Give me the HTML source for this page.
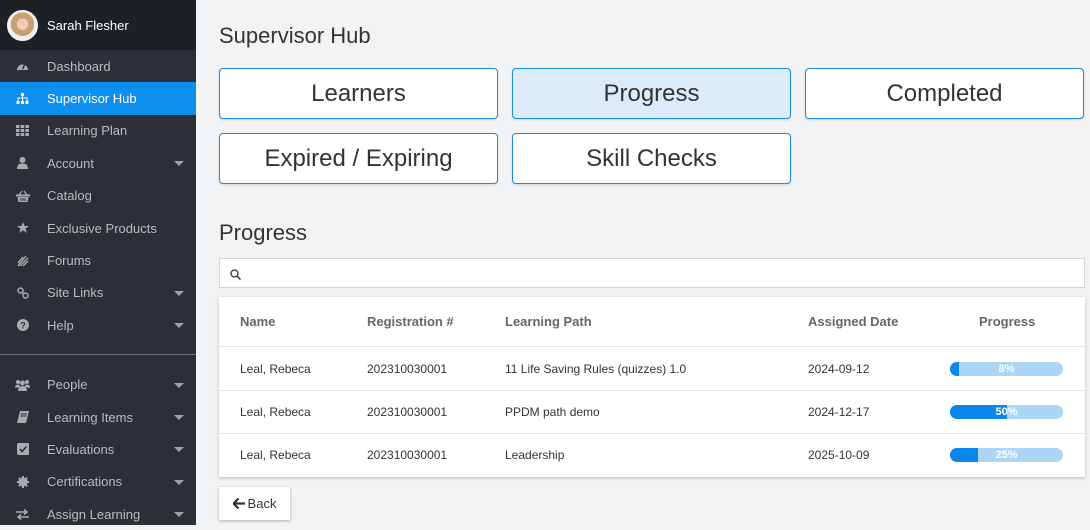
<!DOCTYPE html>
<html><head><meta charset="utf-8">
<style>
*{box-sizing:border-box;margin:0;padding:0}
body{width:1090px;height:525px;overflow:hidden;background:#f2f3f5;font-family:"Liberation Sans",sans-serif;position:relative}
.side{position:absolute;left:0;top:0;width:196px;height:525px;background:#2b3036}
.top{height:50px;background:#1d2125;display:flex;align-items:center;padding-left:7px}
.av{width:31px;height:31px;border-radius:50%;background:radial-gradient(circle at 50% 45%,#f0cdb5 0 28%,#c9a070 29% 58%,#eee 59%);border:2px solid #f4f4f4}
.top span{color:#fff;font-size:13px;margin-left:9px}
.item{height:32.4px;display:flex;align-items:center;color:#b9bcc0;font-size:13px;position:relative}
.item .ic{width:47px;display:flex;justify-content:center;padding-right:2px}
.item.act{background:#0d8ff0;color:#fff}
.item .car{position:absolute;right:12px;top:14px;border-left:5px solid transparent;border-right:5px solid transparent;border-top:5px solid #9da1a6}
.div{height:1px;background:#6c7176;margin:12px 0 14px}
.main{position:absolute;left:196px;top:0;right:0;bottom:0}
h1{position:absolute;left:23px;top:23px;font-size:22px;font-weight:normal;color:#333}
h2{position:absolute;left:23px;top:220px;font-size:22px;font-weight:normal;color:#333}
.btn{position:absolute;width:279px;height:51px;border:1px solid #1b8ce0;border-radius:4px;background:#fff;display:flex;align-items:center;justify-content:center;font-size:24px;color:#333;box-shadow:0 1px 2px rgba(0,0,0,.15)}
.btn.sel{background:#dcebf9}
.search{position:absolute;left:23px;top:258px;width:866px;height:30px;background:#fff;border:1px solid #d2d4d7;padding:8px 10px}
.tbl{position:absolute;left:23px;top:297px;width:866px;height:180px;background:#fff;box-shadow:0 1px 3px rgba(0,0,0,.25);font-size:12px;color:#333}
.row{position:absolute;left:0;width:866px;border-top:1px solid #e2e3e5}
.row div{position:absolute}
.hd{color:#666;font-weight:bold;font-size:13px}
.bar{position:absolute;left:731px;width:113px;height:14px;border-radius:7px;background:#abd6f6;overflow:hidden}
.bar i{position:absolute;left:0;top:0;bottom:0;background:#0b87ec}
.bar b{position:absolute;left:0;right:0;top:0;text-align:center;color:#fff;font-size:11px;line-height:14px}
.back{position:absolute;left:23px;top:487px;width:71px;height:33px;background:#fff;box-shadow:0 1px 3px rgba(0,0,0,.3);font-size:13px;display:flex;align-items:center;justify-content:center;color:#333}
</style></head><body>
<div class="side">
<div class="top"><div class="av"></div><span>Sarah Flesher</span></div>
<div class="item"><span class="ic"><svg width="13" height="12" viewBox="0 0 13 12"><path d="M1 10A5.5 5.5 0 1 1 12 10Z" fill="#a8acb1"/><path d="M6.5 9L9 4" stroke="#2b3036" stroke-width="1.5"/></svg></span>Dashboard</div>
<div class="item act"><span class="ic"><svg width="13" height="12" viewBox="0 0 13 12"><rect x="5" y="0" width="3" height="3" fill="#fff"/><path d="M6.5 3V5M2 8V5H11V8M6.5 5V8" stroke="#fff" fill="none"/><rect x="0.5" y="8" width="3" height="3" fill="#fff"/><rect x="5" y="8" width="3" height="3" fill="#fff"/><rect x="9.5" y="8" width="3" height="3" fill="#fff"/></svg></span>Supervisor Hub</div>
<div class="item"><span class="ic"><svg width="13" height="11" viewBox="0 0 13 11"><g fill="#a8acb1"><rect x="0" y="0" width="3.5" height="3"/><rect x="4.7" y="0" width="3.5" height="3"/><rect x="9.4" y="0" width="3.5" height="3"/><rect x="0" y="4" width="3.5" height="3"/><rect x="4.7" y="4" width="3.5" height="3"/><rect x="9.4" y="4" width="3.5" height="3"/><rect x="0" y="8" width="3.5" height="3"/><rect x="4.7" y="8" width="3.5" height="3"/><rect x="9.4" y="8" width="3.5" height="3"/></g></svg></span>Learning Plan</div>
<div class="item"><span class="ic"><svg width="11" height="12" viewBox="0 0 11 12"><circle cx="5.5" cy="3" r="3" fill="#a8acb1"/><path d="M0 12Q0 6 5.5 6.5Q11 6 11 12Z" fill="#a8acb1"/></svg></span>Account<span class="car"></span></div>
<div class="item"><span class="ic"><svg width="14" height="12" viewBox="0 0 14 12"><path d="M3 5L6 1M11 5L8 1" stroke="#a8acb1" stroke-width="1.3"/><rect x="0" y="4.5" width="14" height="2" fill="#a8acb1"/><path d="M1.5 7H12.5L11.5 12H2.5Z" fill="#a8acb1"/><path d="M5 8V11M7 8V11M9 8V11" stroke="#2b3036"/></svg></span>Catalog</div>
<div class="item"><span class="ic"><svg width="12" height="12" viewBox="0 0 12 12"><path d="M6 0L7.6 4H12L8.5 6.6L9.8 11L6 8.3L2.2 11L3.5 6.6L0 4H4.4Z" fill="#a8acb1"/></svg></span>Exclusive Products</div>
<div class="item"><span class="ic"><svg width="12" height="12" viewBox="0 0 12 12"><path d="M1 11L9 1M3 11L11 3M1 8L6 2M6 11L11 6" stroke="#a8acb1" stroke-width="1.4"/></svg></span>Forums</div>
<div class="item"><span class="ic"><svg width="12" height="12" viewBox="0 0 12 12"><circle cx="3.5" cy="3.5" r="2.5" stroke="#a8acb1" stroke-width="1.5" fill="none"/><circle cx="8.5" cy="8.5" r="2.5" stroke="#a8acb1" stroke-width="1.5" fill="none"/><path d="M5 5L7 7" stroke="#a8acb1" stroke-width="1.5"/></svg></span>Site Links<span class="car"></span></div>
<div class="item"><span class="ic"><svg width="12" height="12" viewBox="0 0 12 12"><circle cx="6" cy="6" r="6" fill="#a8acb1"/><text x="6" y="9.5" font-size="9" font-weight="bold" text-anchor="middle" fill="#2b3036" font-family="Liberation Sans">?</text></svg></span>Help<span class="car"></span></div>
<div class="div"></div>
<div class="item"><span class="ic"><svg width="15" height="12" viewBox="0 0 15 12"><g fill="#a8acb1"><circle cx="3" cy="3" r="2"/><circle cx="12" cy="3" r="2"/><circle cx="7.5" cy="4" r="2.5"/><path d="M0 9Q0 5.5 3 5.5Q5 5.5 5 8ZM15 9Q15 5.5 12 5.5Q10 5.5 10 8ZM3 12Q3 7 7.5 7Q12 7 12 12Z"/></g></svg></span>People<span class="car"></span></div>
<div class="item"><span class="ic"><svg width="12" height="12" viewBox="0 0 12 12"><path d="M3 0H12L9 12H0Z" fill="#a8acb1"/><path d="M4 3H10M3.5 5H9.5" stroke="#2b3036"/></svg></span>Learning Items<span class="car"></span></div>
<div class="item"><span class="ic"><svg width="12" height="12" viewBox="0 0 12 12"><rect width="12" height="12" rx="1.5" fill="#a8acb1"/><path d="M3 6L5 8.5L9.5 3.5" stroke="#2b3036" stroke-width="1.6" fill="none"/></svg></span>Evaluations<span class="car"></span></div>
<div class="item"><span class="ic"><svg width="12" height="12" viewBox="0 0 12 12"><circle cx="6" cy="6" r="4.5" fill="#a8acb1"/><g stroke="#a8acb1" stroke-width="2"><path d="M6 0V12M0 6H12M1.8 1.8L10.2 10.2M10.2 1.8L1.8 10.2"/></g></svg></span>Certifications<span class="car"></span></div>
<div class="item"><span class="ic"><svg width="13" height="11" viewBox="0 0 13 11"><path d="M0 3H11M8 0.5L11 3L8 5.5M13 8H2M5 5.5L2 8L5 10.5" stroke="#a8acb1" stroke-width="1.5" fill="none"/></svg></span>Assign Learning<span class="car"></span></div>
</div>
<div class="main">
<h1>Supervisor Hub</h1>
<div class="btn" style="left:23px;top:68px">Learners</div>
<div class="btn sel" style="left:316px;top:68px">Progress</div>
<div class="btn" style="left:609px;top:68px">Completed</div>
<div class="btn" style="left:23px;top:133px">Expired / Expiring</div>
<div class="btn" style="left:316px;top:133px">Skill Checks</div>
<h2>Progress</h2>
<div class="search"><svg width="11" height="11" viewBox="0 0 11 11"><circle cx="4.5" cy="4.5" r="3.5" stroke="#333" stroke-width="1.3" fill="none"/><path d="M7 7L10.5 10.5" stroke="#333" stroke-width="1.5"/></svg></div>
<div class="tbl">
<div class="row hd" style="top:0;height:49px;border-top:none">
<div style="left:21px;top:17px">Name</div><div style="left:148px;top:17px">Registration #</div><div style="left:286px;top:17px">Learning Path</div><div style="left:589px;top:17px">Assigned Date</div><div style="left:760px;top:17px">Progress</div></div>
<div class="row" style="top:49px;height:44px"><div style="left:21px;top:15px">Leal, Rebeca</div><div style="left:148px;top:15px">202310030001</div><div style="left:286px;top:15px">11 Life Saving Rules (quizzes) 1.0</div><div style="left:589px;top:15px">2024-09-12</div><div class="bar" style="top:15px"><i style="width:8%"></i><b>8%</b></div></div>
<div class="row" style="top:93px;height:43px"><div style="left:21px;top:14px">Leal, Rebeca</div><div style="left:148px;top:14px">202310030001</div><div style="left:286px;top:14px">PPDM path demo</div><div style="left:589px;top:14px">2024-12-17</div><div class="bar" style="top:14px"><i style="width:50%"></i><b>50%</b></div></div>
<div class="row" style="top:136px;height:44px"><div style="left:21px;top:14px">Leal, Rebeca</div><div style="left:148px;top:14px">202310030001</div><div style="left:286px;top:14px">Leadership</div><div style="left:589px;top:14px">2025-10-09</div><div class="bar" style="top:14px"><i style="width:25%"></i><b>25%</b></div></div>
</div>
<div class="back"><svg width="12" height="11" viewBox="0 0 12 11" style="margin-right:3px"><path d="M5.5 0.5L0.5 5.5L5.5 10.5M1 5.5H12" stroke="#333" stroke-width="2.2" fill="none"/></svg>Back</div>
</div>
</body></html>
